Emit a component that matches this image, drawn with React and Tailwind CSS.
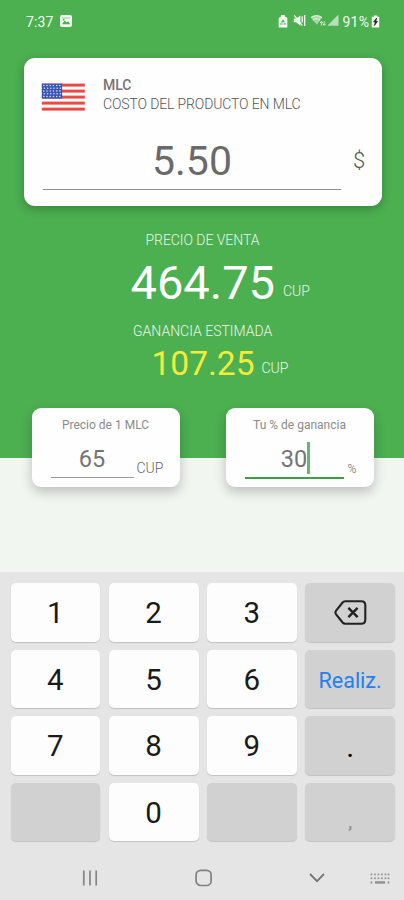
import { useState } from "react";

const KEYS = [
	{ label: "1" },
	{ label: "2" },
	{ label: "3" },
	{ label: "del", type: "delete" },
	{ label: "4" },
	{ label: "5" },
	{ label: "6" },
	{ label: "Realiz.", type: "done" },
	{ label: "7" },
	{ label: "8" },
	{ label: "9" },
	{ label: ".", type: "dot" },
	{ label: "", type: "empty" },
	{ label: "0" },
	{ label: "", type: "empty" },
	{ label: ",", type: "comma" },
];

const KEY_STYLES = {
	digit: "bg-[#fdfdfd] text-[29.5px] text-[#1a1a1a] pt-[3px]",
	delete: "bg-[#d1d1d1] text-[#222] pt-[1px]",
	done: "bg-[#d1d1d1] text-[21.5px] text-[#2380f0] pt-[3px]",
	dot: "bg-[#d1d1d1] text-[30px] text-black pt-[4px]",
	empty: "bg-[#d1d1d1]",
	comma: "bg-[#d1d1d1] text-[20px] text-[#8c8c8c] pt-[18px]",
};

function StatusBar() {
	return (
		<div className="flex h-[58px] items-start pl-[26px] pr-[24px] pt-[15px] text-[#f4fbf2]">
			<span className="text-[14px] leading-[15px] tracking-[0.1px]">7:37</span>
			<svg className="ml-[7px]" width="12" height="12" viewBox="0 0 12 12">
				<rect width="12" height="12" rx="2" fill="#f4fbf2" />
				<path d="M2 9.2 4.6 5.6 6.6 7.6 8.2 6.2 10.2 9.2Z" fill="#4caf50" />
				<path d="M2 2.5h8v1H2z" fill="#8bcb8c" />
				<circle cx="3.7" cy="4.6" r="0.9" fill="#4caf50" />
			</svg>
			<div className="ml-auto flex items-start">
				{/* ahorro de datos */}
				<svg className="-mt-[0.5px]" width="10" height="13" viewBox="0 0 10 13">
					<path d="M3.2 0h3.6v1.2L9.3 3v9.5H.7V3L3.2 1.2Z" fill="#f4fbf2" />
					<path d="M5 5 7.2 9H2.8Z" fill="none" stroke="#4caf50" strokeWidth="1.1" strokeDasharray="2.6 0.9" />
				</svg>
				{/* silencio */}
				<svg className="ml-[5px] -mt-px" width="13" height="13" viewBox="0 0 13 13">
					<path d="M.8 4.5h2.4L7.4 1.4v10.3L3.2 8.3H.8Z" fill="#f4fbf2" />
					<path d="M1.2 1.4 9.4 11.6" stroke="#f4fbf2" strokeWidth="1.2" />
					<path d="M9.2 2.2v6.4M11.7 1v11" stroke="#f4fbf2" strokeWidth="1.3" />
				</svg>
				{/* wifi */}
				<svg className="ml-[4px] -mt-px" width="17" height="13" viewBox="0 0 17 13">
					<path d="M.8 3.6Q6.5-.6 12.2 3.6L6.8 10.8Z" fill="#a5d6a6" />
					<path d="M1 3.6Q6.5-.4 12 3.6M3 6.2Q6.6 3.2 10 6.2" fill="none" stroke="#d6eed4" strokeWidth="1.3" />
					<path d="M11.4 7.6v4M10.1 9 11.4 7.4 12.7 9M14.2 7.2v4M12.9 9.8l1.3 1.6 1.3-1.6" fill="none" stroke="#d6eed4" strokeWidth="1" />
				</svg>
				<svg className="-mt-px" width="12" height="12" viewBox="0 0 12 12">
					<path d="M.3 11.8 11.5 0.6v11.2Z" fill="#b9dfb9" />
				</svg>
				<span className="ml-[4px] w-[28.5px] text-[14px] leading-[15px] tracking-[0.2px]">91%</span>
				<svg className="-mt-[0.5px]" width="9" height="13" viewBox="0 0 9 13">
					<path d="M2.8.5h3.4v1.2H8.2v10.8H.8V1.7h2Z" fill="#f4fbf2" />
					<path d="M5.6 3 2.6 7h1.7L3.4 10.6 6.6 6.3H4.8Z" fill="#1b2b1b" stroke="#1b2b1b" strokeWidth="0.7" />
				</svg>
			</div>
		</div>
	);
}

function Flag() {
	return (
		<svg width="44" height="28" viewBox="0 0 44 28">
			<rect width="44" height="28" fill="#fff" />
			{[0, 6, 12, 18, 24].map((y) => (
				<rect key={y} x="0.8" y={y + 0.6} width="43" height="3" fill="#ea4a43" />
			))}
			<rect x="0.8" y="0.6" width="20.4" height="15" fill="#3a55b4" />
			{[2.6, 5.3, 8, 10.7, 13.4].map((y, row) =>
				[2.8, 6, 9.2, 12.4, 15.6, 18.8].map((x) => (
					<circle key={`${x}-${y}`} cx={x + (row % 2 ? 0.6 : 0)} cy={y} r="0.75" fill="#dfe5f6" />
				)),
			)}
		</svg>
	);
}

function DeleteIcon() {
	return (
		<svg width="33" height="25" viewBox="0 0 33 25" fill="none" stroke="#222" strokeWidth="2.1" strokeLinejoin="round">
			<path d="M11.2 1.3H27.3Q31.3 1.3 31.3 5.3V19.7Q31.3 23.7 27.3 23.7H11.2Q9.6 23.7 8.6 22.5L2.1 14.3Q.8 12.5 2.1 10.7L8.6 2.5Q9.6 1.3 11.2 1.3Z" />
			<path d="m14.4 7.8 9.2 9.4M23.6 7.8 14.4 17.2" strokeWidth="2.4" />
		</svg>
	);
}

function Key({ label, type = "digit", onPress }) {
	return (
		<button
			onClick={onPress}
			className={`flex h-[58.5px] items-center justify-center rounded-[5px] leading-none shadow-[0_1px_1px_rgba(0,0,0,0.16)] ${KEY_STYLES[type]}`}
		>
			{type === "delete" ? <DeleteIcon /> : label}
		</button>
	);
}

function NavBar() {
	return (
		<div className="flex items-center pl-[82px] pr-[14px] pt-[27.5px]">
			<svg width="16" height="16" viewBox="0 0 16 16" stroke="#858585" strokeWidth="1.7">
				<path d="M1.8 .5v15M8 .5v15M14.2 .5v15" />
			</svg>
			<svg className="ml-[97px]" width="18" height="18" viewBox="0 0 18 18" fill="none" stroke="#808080" strokeWidth="1.7">
				<rect x="1.1" y="1.3" width="15" height="15.2" rx="4.6" />
			</svg>
			<svg className="ml-[95px]" width="18" height="12" viewBox="0 0 18 12" fill="none" stroke="#757575" strokeWidth="1.8">
				<path d="m2 2 7 7.2L16 2" />
			</svg>
			<svg className="ml-auto mt-[3px]" width="20" height="12" viewBox="0 0 20 12" fill="#929292">
				{[0.6, 4.4].map((y) =>
					[0.6, 4.1, 7.6, 11.1, 14.6, 17.6].map((x) => (
						<rect key={`${x}-${y}`} x={x} y={y} width="1.7" height="1.7" />
					)),
				)}
				<rect x="0.6" y="8.4" width="1.7" height="2.2" />
				<rect x="5" y="8.2" width="10" height="2.5" />
				<rect x="17.6" y="8.4" width="1.7" height="2.2" />
			</svg>
		</div>
	);
}

export default function App() {
	const [margin, setMargin] = useState("30");

	const pressKey = ({ label, type }) => {
		if (type === "delete") setMargin((m) => m.slice(0, -1));
		else if (!type) setMargin((m) => m + label);
	};

	const price = 5.5 * 65 * (1 + Number(margin) / 100);
	const profit = price - 5.5 * 65;

	return (
		<div className="flex h-[900px] w-[404px] flex-col overflow-hidden bg-[#f1f6f1] font-['Roboto',sans-serif]">
			{/* Zona verde */}
			<div className="h-[458px] shrink-0 bg-[#4caf50]">
				<StatusBar />

				<div className="ml-[24px] h-[148px] w-[357.5px] rounded-[11px] bg-[#fefefe] pl-[17px] pt-[19.5px] shadow-[0_3px_10px_rgba(0,0,0,0.25)]">
					<div className="flex">
						<div className="pt-[5.5px]">
							<Flag />
						</div>
						<div className="ml-[18px] whitespace-nowrap leading-none">
							<p className="text-[14px] font-medium tracking-[-0.1px] text-[#757575]">MLC</p>
							<p className="mt-[5px] text-[14px] font-light tracking-[-0.13px] text-[#555]">
								COSTO DEL PRODUCTO EN MLC
							</p>
						</div>
					</div>
					<div className="mt-[30px] flex">
						<div className="ml-[2px] h-[49px] w-[298px] border-b-[1.5px] border-[#8f8f8f] text-center text-[41px] leading-none text-[#6a6a6a]">
							5.50
						</div>
						<span className="ml-[12px] mt-[9px] text-[22px] font-light leading-none text-[#555]">$</span>
					</div>
				</div>

				{/* Resultados */}
				<div className="mt-[27px] whitespace-nowrap leading-none text-[#eaf7e8]">
					<p className="pl-[145.5px] text-[14px] font-light tracking-[-0.05px]">PRECIO DE VENTA</p>
					<div className="mt-[12px] flex items-baseline pl-[130.5px]">
						<span className="text-[47px] text-white">{price.toFixed(2)}</span>
						<span className="relative -top-[3px] ml-[8px] text-[14px] font-light">CUP</span>
					</div>
					<p className="mt-[17.5px] pl-[133px] text-[14px] font-light">GANANCIA ESTIMADA</p>
					<div className="mt-[9px] flex items-baseline pl-[151.5px]">
						<span className="text-[33.5px] text-[#f4eb3b]">{profit.toFixed(2)}</span>
						<span className="relative -top-[2px] ml-[7px] text-[14px] font-light">CUP</span>
					</div>
				</div>
			</div>

			{/* Tarjetas inferiores, montadas sobre el borde verde */}
			<div className="relative -mt-[50.5px] flex h-[164.5px] shrink-0 items-start gap-[46px] pl-[31.5px] leading-none text-[#666]">
				<div className="h-[79px] w-[148px] rounded-[9px] bg-[#fefefe] pt-[11px] shadow-[0_5px_12px_rgba(0,0,0,0.22)]">
					<p className="text-center text-[12px] text-[#8a8a8a]">Precio de 1 MLC</p>
					<div className="mt-[17.5px] flex pl-[19px]">
						<div className="h-[30px] w-[83px] border-b-[1.5px] border-[#9a9a9a] text-center text-[23.5px] text-[#747474]">65</div>
						<span className="ml-[3px] mt-[13px] text-[14px] font-light">CUP</span>
					</div>
				</div>
				<div className="h-[79px] w-[148px] rounded-[9px] bg-[#fefefe] pt-[11px] shadow-[0_5px_12px_rgba(0,0,0,0.22)]">
					<p className="text-center text-[12px] text-[#8a8a8a]">Tu % de ganancia</p>
					<div className="mt-[17.5px] flex pl-[19px]">
						<div className="flex h-[30.5px] w-[99px] justify-center border-b-2 border-[#3f9f45] text-[23.5px] text-[#747474]">
							{margin}
							<span className="-mr-[2.5px] -mt-[6px] h-[32px] w-[2.5px] bg-[#6bb56e]" />
						</div>
						<span className="ml-[4px] mt-[15px] text-[12px] font-light">%</span>
					</div>
				</div>
			</div>

			{/* Teclado */}
			<div className="h-[328px] shrink-0 bg-[#e5e5e5] pt-[11px]">
				<div className="grid grid-cols-4 gap-x-[8.5px] gap-y-[8px] pl-[10.5px] pr-[9px]">
					{KEYS.map((k, i) => (
						<Key key={i} {...k} onPress={() => pressKey(k)} />
					))}
				</div>
				<NavBar />
			</div>
		</div>
	);
}
